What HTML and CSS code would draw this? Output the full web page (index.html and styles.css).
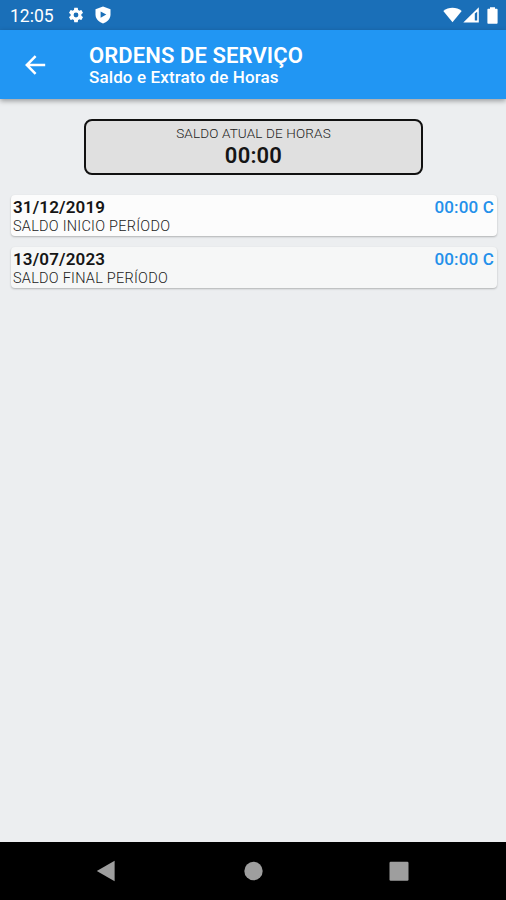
FILE: index.html
```html
<!DOCTYPE html>
<html lang="pt-BR">
<head>
    <meta charset="UTF-8">
    <meta name="viewport" content="width=device-width, initial-scale=1.0">
    <title>Ordens de Serviço</title>
    <link rel="stylesheet" href="styles.css">
</head>
<body>

<div class="status-bar">
    <span class="clock">12:05</span>
    <svg class="gear" width="18" height="18" viewBox="0 0 24 24" fill="#fff">
        <path d="M19.14 12.94c.04-.3.06-.61.06-.94 0-.32-.02-.64-.07-.94l2.03-1.58a.49.49 0 0 0 .12-.61l-1.92-3.32a.49.49 0 0 0-.59-.22l-2.39.96c-.5-.38-1.03-.7-1.62-.94l-.36-2.54a.48.48 0 0 0-.48-.41h-3.84c-.24 0-.43.17-.47.41l-.36 2.54c-.59.24-1.13.57-1.62.94l-2.39-.96a.48.48 0 0 0-.59.22L2.74 8.87c-.12.21-.08.47.12.61l2.03 1.58c-.05.3-.09.63-.09.94s.02.64.07.94l-2.03 1.58a.49.49 0 0 0-.12.61l1.92 3.32c.12.22.37.29.59.22l2.39-.96c.5.38 1.03.7 1.62.94l.36 2.54c.05.24.24.41.48.41h3.84c.24 0 .44-.17.47-.41l.36-2.54c.59-.24 1.13-.56 1.62-.94l2.39.96c.22.08.47 0 .59-.22l1.92-3.32a.48.48 0 0 0-.12-.61l-2.01-1.58zM12 15.2a3.2 3.2 0 1 1 0-6.4 3.2 3.2 0 0 1 0 6.4z"/>
    </svg>
    <svg class="shield" width="16" height="18" viewBox="0 0 16 18">
        <path fill="#fff" d="M8 .5 15.5 3.2V8.5C15.5 12.8 12.5 16 8 17.4 3.5 16 .5 12.8.5 8.5V3.2z"/>
        <path fill="#1a6fb8" d="M5.6 5.4 11.3 8.6 5.6 11.8z"/>
    </svg>
    <div class="signals">
        <svg class="wifi" width="19" height="16" viewBox="0 0 19 16">
            <path fill="#fff" d="M9.5 15.2.3 4C5.5-.4 13.5-.4 18.7 4z"/>
        </svg>
        <svg class="mobile" width="17" height="16" viewBox="0 0 17 16">
            <path fill="#fff" fill-rule="evenodd" d="M.3 15.5 15.8.2V15.5zM11.8 6.5V13.5H14.2V4.8z"/>
        </svg>
        <svg class="battery" width="11" height="17" viewBox="0 0 11 17">
            <path fill="#fff" d="M3 .2h5v1.6h1.6c.6 0 1 .4 1 1v13c0 .6-.4 1-1 1H1.4c-.6 0-1-.4-1-1v-13c0-.6.4-1 1-1H3z"/>
        </svg>
    </div>
</div>

<header class="toolbar">
    <svg class="back" width="22" height="20" viewBox="0 0 22 20" fill="none" stroke="#fff" stroke-width="2.5">
        <path d="M20.2 10H2.5M10.6 1.2 1.8 10 10.6 18.8"/>
    </svg>
    <div class="titles">
        <h1>ORDENS DE SERVIÇO</h1>
        <h2>Saldo e Extrato de Horas</h2>
    </div>
</header>

<main class="content">
    <div class="balance">
        <span class="balance-label">SALDO ATUAL DE HORAS</span>
        <span class="balance-value">00:00</span>
    </div>

    <div class="entry entry-first">
        <div class="entry-top">
            <span class="date">31/12/2019</span>
            <span class="hours">00:00 C</span>
        </div>
        <span class="description">SALDO INICIO PERÍODO</span>
    </div>

    <div class="entry">
        <div class="entry-top">
            <span class="date">13/07/2023</span>
            <span class="hours">00:00 C</span>
        </div>
        <span class="description">SALDO FINAL PERÍODO</span>
    </div>
</main>

<nav class="nav-bar">
    <svg width="20" height="22" viewBox="0 0 20 22" fill="#9e9e9e"><path d="M.8 11 18.6.7V21.3z"/></svg>
    <svg width="20" height="22" viewBox="0 0 20 22" fill="#9e9e9e"><circle cx="10.5" cy="11" r="9.2"/></svg>
    <svg width="20" height="22" viewBox="0 0 20 22" fill="#9e9e9e"><rect x=".5" y="1.7" width="19" height="19" rx="1.2"/></svg>
</nav>

</body>
</html>
```
FILE: styles.css
```css
* {
    box-sizing: border-box;
}

body {
    margin: 0;
    height: 100vh;
    display: flex;
    flex-direction: column;
    overflow: hidden;
    font-family: Roboto, sans-serif;
    background-color: #eceef0;
}

.status-bar {
    display: flex;
    align-items: center;
    height: 30px;
    padding: 0 8px 0 10px;
    background-color: #1a6fb8;
    color: #fff;
}

.clock {
    width: 44px;
    padding-top: 2px;
    font-size: 17.5px;
    white-space: nowrap;
}

.gear {
    margin-left: 13px;
}

.shield {
    margin-left: 10px;
}

.signals {
    display: flex;
    align-items: center;
    margin-left: auto;
}

.mobile {
    margin-left: 1px;
}

.battery {
    margin-left: 7px;
}

.toolbar {
    display: flex;
    align-items: center;
    height: 69px;
    padding-left: 25px;
    background-color: #2196f3;
    color: #fff;
    box-shadow: 0 2px 5px rgba(0, 0, 0, 0.35);
}

.titles {
    margin-left: 42px;
    padding-top: 1px;
}

.titles h1 {
    margin: 0;
    font-size: 22px;
    font-weight: 600;
    line-height: 24px;
    letter-spacing: 0.1px;
    white-space: nowrap;
}

.titles h2 {
    margin: 0;
    font-size: 17px;
    font-weight: 500;
    line-height: 18px;
    letter-spacing: 0.12px;
    white-space: nowrap;
}

.content {
    flex: 1;
    padding: 20px 9px 0 11px;
}

.balance {
    display: flex;
    flex-direction: column;
    align-items: center;
    width: 339px;
    height: 56px;
    margin: 0 auto 20px 73px;
    padding-top: 3px;
    border: 2px solid #111;
    border-radius: 8px;
    background-color: #e0e0e0;
}

.balance-label {
    font-size: 13.5px;
    font-weight: 300;
    line-height: 18px;
    letter-spacing: 0.15px;
    color: #222;
}

.balance-value {
    font-size: 22px;
    font-weight: 600;
    line-height: 27px;
    letter-spacing: 0.2px;
    color: #151515;
}

.entry {
    height: 41px;
    margin-bottom: 11px;
    padding: 2px 3px 0 2px;
    border-radius: 4px;
    background-color: #f6f7f7;
    box-shadow: 0 1px 2px rgba(0, 0, 0, 0.25);
}

.entry-first {
    background-color: #fcfcfc;
}

.entry-top {
    display: flex;
    justify-content: space-between;
    font-size: 17px;
    line-height: 20px;
    letter-spacing: 0.15px;
}

.date {
    font-weight: 600;
    color: #151515;
}

.hours {
    font-weight: 500;
    color: #2390ea;
}

.description {
    display: block;
    font-size: 14.5px;
    font-weight: 300;
    line-height: 20px;
    letter-spacing: 0.25px;
    color: #222;
}

.nav-bar {
    display: flex;
    justify-content: space-between;
    align-items: center;
    height: 58px;
    padding: 0 97px 0 96px;
    background-color: #000;
}
```
